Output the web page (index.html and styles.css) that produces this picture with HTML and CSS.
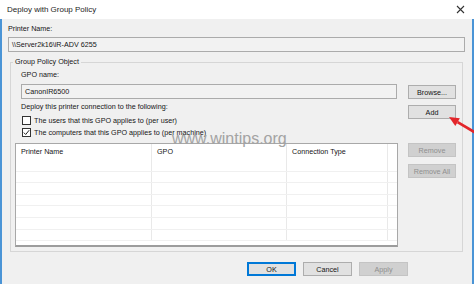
FILE: index.html
```html
<!DOCTYPE html>
<html>
<head>
<meta charset="utf-8">
<title>Deploy with Group Policy</title>
<link rel="stylesheet" href="styles.css">
</head>
<body>
<div class="window">
  <div class="titlebar">
    <span class="title">Deploy with Group Policy</span>
    <svg class="close" width="9" height="9" viewBox="0 0 9 9"><path d="M1 1L8 8M8 1L1 8" stroke="#333" stroke-width="1.1" fill="none"/></svg>
  </div>
  <div class="main">
    <div class="label">Printer Name:</div>
    <div class="textbox wide">\\Server2k16\iR-ADV 6255</div>
    <fieldset class="group">
      <legend>Group Policy Object</legend>
      <div class="grid">
        <div class="cell-gpo">
          <div class="label">GPO name:</div>
          <div class="textbox gpo">CanonIR6500</div>
        </div>
        <div class="btn browse">Browse...</div>
        <div class="cell-deploy">
          <div class="label deploy">Deploy this printer connection to the following:</div>
          <div class="check"><span class="box"></span><span>The users that this GPO applies to (per user)</span></div>
          <div class="check"><span class="box"><svg width="7" height="7" viewBox="0 0 7 7"><path d="M0.8 3.6L2.7 5.5L6.2 1.2" stroke="#222" stroke-width="1" fill="none"/></svg></span><span>The computers that this GPO applies to (per machine)</span></div>
        </div>
        <div class="btn add">Add</div>
        <div class="listview">
          <div class="lv-row lv-head"><div class="cell">Printer Name</div><div class="cell">GPO</div><div class="cell">Connection Type</div><div class="cell last"></div></div>
          <div class="lv-row"><div class="cell"></div><div class="cell"></div><div class="cell"></div><div class="cell last"></div></div>
          <div class="lv-row"><div class="cell"></div><div class="cell"></div><div class="cell"></div><div class="cell last"></div></div>
          <div class="lv-row"><div class="cell"></div><div class="cell"></div><div class="cell"></div><div class="cell last"></div></div>
          <div class="lv-row"><div class="cell"></div><div class="cell"></div><div class="cell"></div><div class="cell last"></div></div>
          <div class="lv-row"><div class="cell"></div><div class="cell"></div><div class="cell"></div><div class="cell last"></div></div>
          <div class="lv-row"><div class="cell"></div><div class="cell"></div><div class="cell"></div><div class="cell last"></div></div>
          <div class="lv-row"><div class="cell"></div><div class="cell"></div><div class="cell"></div><div class="cell last"></div></div>
        </div>
        <div class="side-btns">
          <div class="btn disabled">Remove</div>
          <div class="btn disabled">Remove All</div>
        </div>
      </div>
    </fieldset>
    <div class="footer">
      <div class="btn default">OK</div>
      <div class="btn">Cancel</div>
      <div class="btn disabled">Apply</div>
    </div>
  </div>
  <div class="watermark">www.wintips.org</div>
  <svg class="arrow" width="30" height="26" viewBox="0 0 30 26">
    <path d="M13.6 10.1L32 21" stroke="#e3262b" stroke-width="2.8" fill="none"/>
    <path d="M5 5L11.3 14L15.9 6.2Z" fill="#e3262b"/>
  </svg>
</div>
</body>
</html>
```
FILE: styles.css
```css
* { box-sizing: border-box; }
html, body { margin: 0; padding: 0; }
body {
  width: 474px;
  height: 284px;
  overflow: hidden;
  font-family: "Liberation Sans", Arial, sans-serif;
  font-size: 7.2px;
  color: #151515;
  background: #f0f0f0;
}
.window {
  position: relative;
  width: 474px;
  height: 284px;
  display: flex;
  flex-direction: column;
}
.titlebar {
  flex: none;
  height: 19px;
  background: #fff;
  display: flex;
  align-items: center;
  justify-content: space-between;
  padding: 0 9px 1px 7px;
}
.title { font-size: 8px; color: #1e1e1e; }
.close { display: block; }
.main {
  flex: 1;
  background: #f0f0f0;
  border-left: 2px solid #4a94d6;
  border-right: 2px solid #4a94d6;
  padding: 5px 7px 0 6px;
  display: flex;
  flex-direction: column;
}
.label { height: 10px; line-height: 10px; white-space: nowrap; }
.textbox {
  height: 15px;
  line-height: 13px;
  border: 1px solid #ababab;
  background: #f2f2f2;
  padding-left: 3px;
  white-space: nowrap;
}
.textbox.wide { margin-top: 3px; }
.group {
  margin: 5px 2px 0 2px;
  border: 1px solid #d6d6d6;
  padding: 3px 6px 4px 10px;
  min-width: 0;
}
.group legend {
  padding: 0 2px;
  margin-left: -8px;
  line-height: 10px;
  font-size: 7.2px;
}
.grid {
  display: grid;
  grid-template-columns: 1fr 48px;
  column-gap: 11px;
}
.textbox.gpo { margin-top: 4px; }
.btn {
  height: 14px;
  display: flex;
  align-items: center;
  justify-content: center;
  border: 1px solid #adadad;
  background: #e1e1e1;
  white-space: nowrap;
}
.btn.disabled { background: #d0d0d0; border-color: #c4c4c4; color: #8f8f8f; }
.btn.default { border-color: #0078d7; box-shadow: inset 0 0 0 1px #0078d7; }
.browse { align-self: end; }
.deploy { margin-top: 3px; }
.check {
  display: flex;
  align-items: center;
  height: 12px;
  margin-left: 1px;
  gap: 3px;
  white-space: nowrap;
}
.deploy + .check { margin-top: 2px; }
.box {
  width: 9px;
  height: 9px;
  border: 1px solid #333;
  background: #fff;
  display: flex;
  align-items: center;
  justify-content: center;
}
.box svg { display: block; }
.add { align-self: start; margin-top: 6px; }
.listview {
  margin: 5px -1px 0 -6px;
  height: 104px;
  background: #fff;
  border: 1px solid #a8a8a8;
  border-bottom: 2px solid #9c9c9c;
  overflow: hidden;
}
.lv-row {
  display: grid;
  grid-template-columns: 136px 135px 101px 1fr;
  height: 11.6px;
  border-bottom: 1px solid #f0f0f0;
}
.lv-row.lv-head { height: 16px; border-bottom-color: transparent; }
.cell { border-right: 1px solid #e9e9e9; padding-left: 5px; line-height: 16px; white-space: nowrap; }
.cell.last { border-right: none; }
.side-btns {
  margin-top: 5px;
  display: flex;
  flex-direction: column;
  gap: 7px;
}
.footer {
  margin: 10px 57px 0 0;
  display: flex;
  justify-content: flex-end;
  gap: 7px;
}
.footer .btn { width: 49px; }
.watermark {
  position: absolute;
  left: 172px;
  top: 134px;
  font-size: 16px;
  line-height: 10px;
  color: #a3a3a3;
  white-space: nowrap;
}
.arrow {
  position: absolute;
  left: 444px;
  top: 112px;
  overflow: visible;
}
```
